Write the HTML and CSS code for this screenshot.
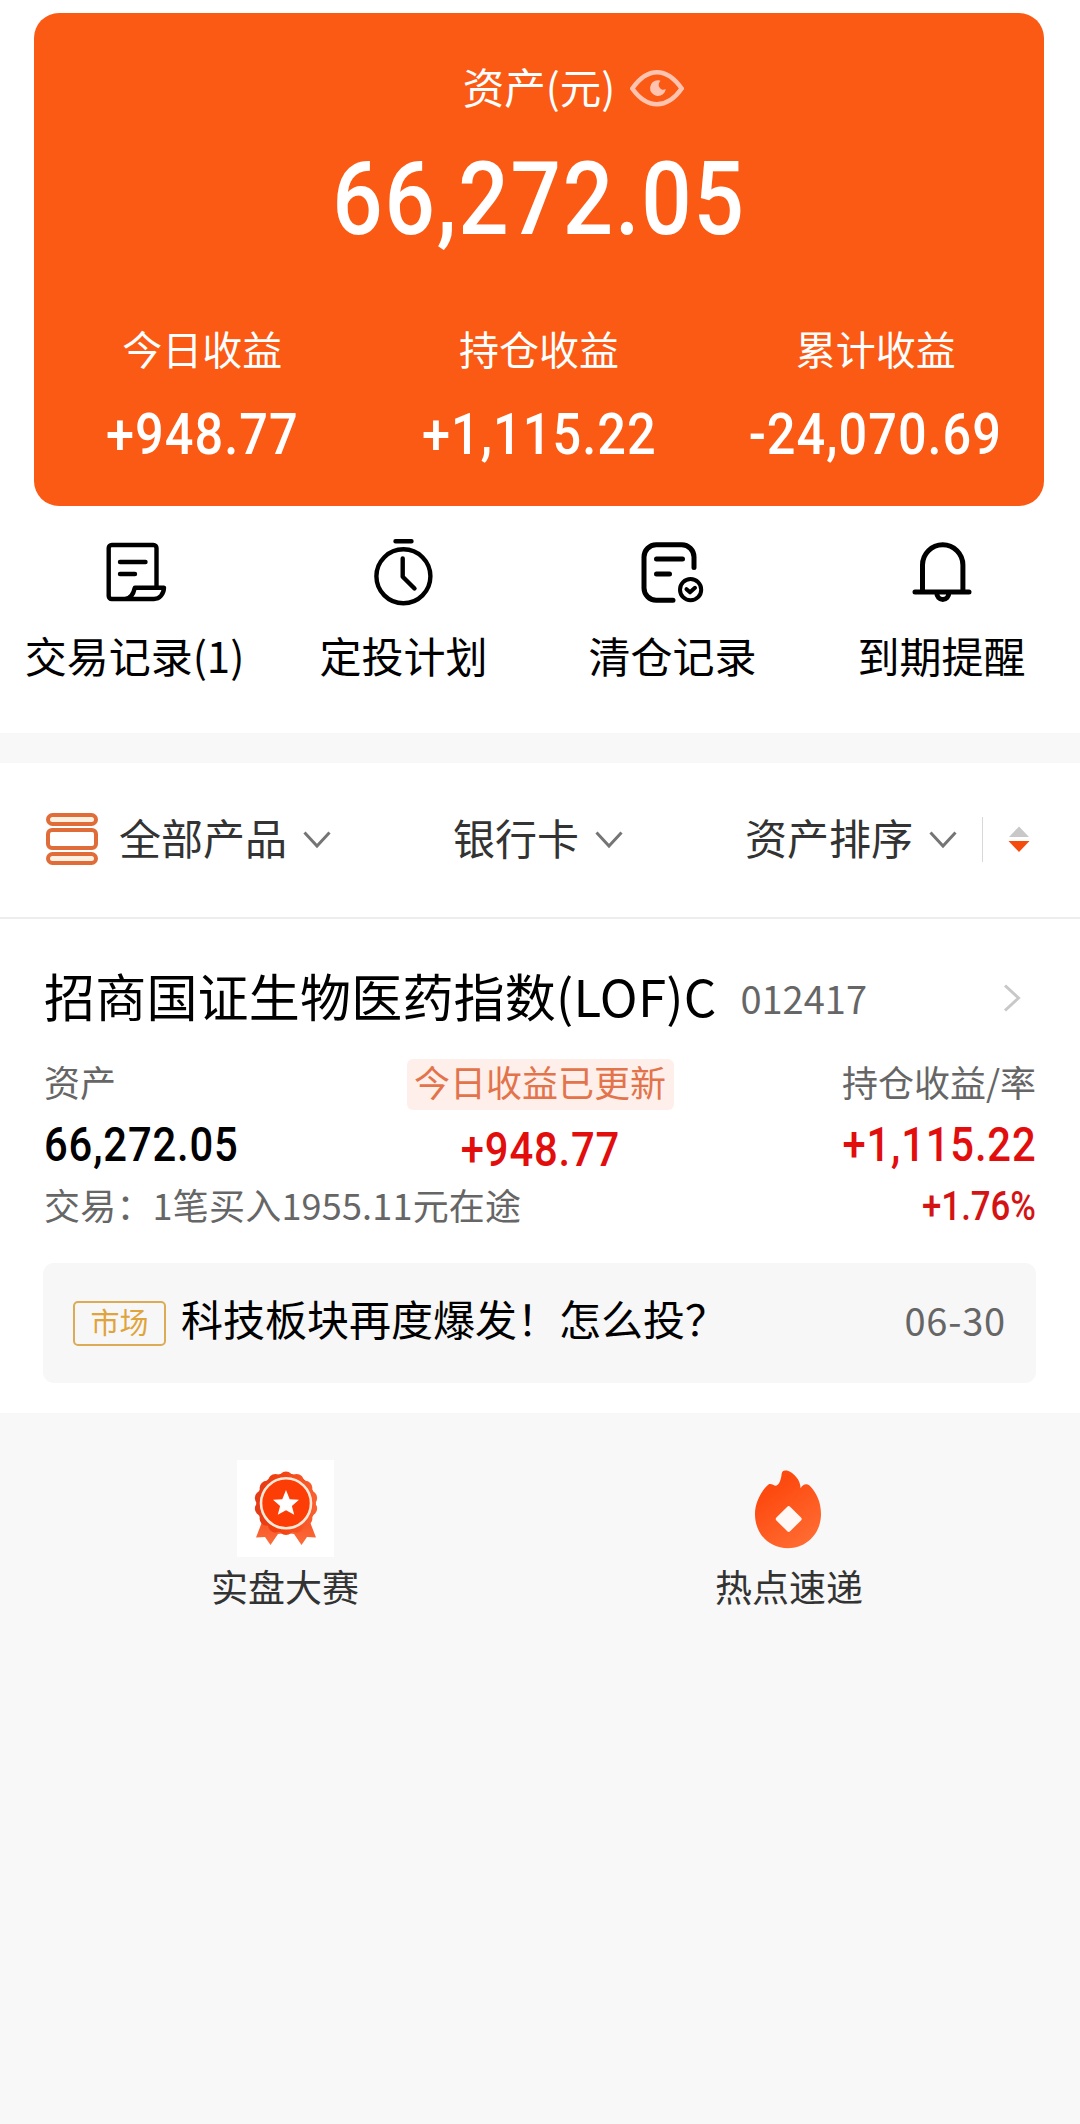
FILE: index.html
```html
<!DOCTYPE html>
<html lang="zh-CN">
<head>
<meta charset="utf-8">
<title>资产</title>
<link rel="stylesheet" href="styles.css">
</head>
<body>
<main class="page">
  <section class="top">
    <div class="summary">
      <div class="summary-head">
        <span class="summary-title">资产(元)</span>
        <svg class="eye" width="54" height="39" viewBox="0 0 54 39"><path class="eye-line" d="M2.300 19.500C9 10 17 3.200 27 3.200S45 10 51.700 19.500C45 29 37 35.200 27 35.200S9 29 2.300 19.500Z"/><path class="eye-pupil" d="M28.500 11.200a7.900 7.900 0 1 0 7.300 8.800a4.600 4.600 0 0 1-6.800-2.500c-.800-2.200 0-4.300 1.500-5.800Z"/></svg>
      </div>
      <div class="total num">66,272.05</div>
      <div class="stats">
        <div><div class="stat-label">今日收益</div><div class="stat-value num">+948.77</div></div>
        <div><div class="stat-label">持仓收益</div><div class="stat-value num">+1,115.22</div></div>
        <div><div class="stat-label">累计收益</div><div class="stat-value num">-24,070.69</div></div>
      </div>
    </div>
    <nav class="actions">
      <a class="action">
        <svg class="line-icon" width="70" height="70" viewBox="0 0 70 70"><path d="M56.500 50V11a3 3 0 0 0-3-3H11.700a3 3 0 0 0-3 3v48a3 3 0 0 0 3 3H54c5.500 0 9.600-4.500 10-11.300H34.800C33.500 57 31 61.500 25 62M20 25H45.500M20 37H35"/></svg>
        <span>交易记录(1)</span>
      </a>
      <a class="action">
        <svg class="line-icon" width="70" height="70" viewBox="0 0 70 70"><circle cx="34.400" cy="39.300" r="27"/><path d="M26.500 4.300H42.500M33.700 21.500V39.800L45.500 51.500"/></svg>
        <span>定投计划</span>
      </a>
      <a class="action">
        <svg class="line-icon bold" width="70" height="70" viewBox="0 0 70 70"><path d="M56 30.500V20a12.200 12.200 0 0 0-12.200-12.200H18.200A12.200 12.200 0 0 0 6 20V51a12.200 12.200 0 0 0 12.200 12.200H35M18.500 22H44.500M18.500 37H31.500"/><circle class="thin" cx="52.600" cy="52.700" r="10.600"/><path class="thin" d="M48.500 52.200L52 55.300L57 50.800"/></svg>
        <span>清仓记录</span>
      </a>
      <a class="action">
        <svg class="line-icon bold" width="70" height="70" viewBox="0 0 70 70"><path d="M15.500 54V28a20.200 20.200 0 0 1 40.400 0V54M8 55H62M29.800 56a6 6.500 0 0 0 12 0"/></svg>
        <span>到期提醒</span>
      </a>
    </nav>
  </section>

  <section class="filters">
    <div class="filter">
      <svg class="stack" width="52" height="52" viewBox="0 0 52 52"><rect x="2" y="2" width="48" height="9" rx="4.500"/><rect class="middle" x="2" y="17" width="48" height="18" rx="4"/><rect x="2" y="41" width="48" height="9" rx="4.500"/></svg>
      <span>全部产品</span>
      <svg class="chevron" width="28" height="18" viewBox="0 0 28 18"><path d="M1.500 1.500L14 15L26.500 1.500"/></svg>
    </div>
    <div class="filter">
      <span>银行卡</span>
      <svg class="chevron" width="28" height="18" viewBox="0 0 28 18"><path d="M1.500 1.500L14 15L26.500 1.500"/></svg>
    </div>
    <div class="filter">
      <span>资产排序</span>
      <svg class="chevron" width="28" height="18" viewBox="0 0 28 18"><path d="M1.500 1.500L14 15L26.500 1.500"/></svg>
      <i class="divider"></i>
      <svg class="sort" width="22" height="26" viewBox="0 0 22 26"><path fill="#c8c8c8" d="M1 11L11 0.500L21 11Z"/><path fill="#f54b0c" d="M0.500 15H21.500L11 26Z"/></svg>
    </div>
  </section>

  <section class="fund">
    <header class="fund-head">
      <h2>招商国证生物医药指数(LOF)C</h2>
      <span class="code">012417</span>
      <svg class="go" width="18" height="28" viewBox="0 0 18 28"><path d="M2 1.500L15.500 14L2 26.500"/></svg>
    </header>
    <div class="metrics">
      <div class="metric left">
        <div class="metric-label">资产</div>
        <div class="metric-value num">66,272.05</div>
      </div>
      <div class="metric center">
        <div class="badge">今日收益已更新</div>
        <div class="metric-value num up">+948.77</div>
      </div>
      <div class="metric right">
        <div class="metric-label">持仓收益/率</div>
        <div class="metric-value num up">+1,115.22</div>
      </div>
    </div>
    <div class="transit">
      <span>交易：1笔买入1955.11元在途</span>
      <span class="rate num up">+1.76%</span>
    </div>
    <div class="news">
      <span class="tag">市场</span>
      <span class="headline">科技板块再度爆发！怎么投？</span>
      <time class="date">06-30</time>
    </div>
  </section>

  <section class="links">
    <a class="link">
      <svg class="tile" width="97" height="97" viewBox="0 0 97 97">
        <defs><linearGradient id="medal" gradientUnits="userSpaceOnUse" x1="0" y1="11" x2="0" y2="85"><stop offset="0" stop-color="#e23a17"/><stop offset=".35" stop-color="#f4400f"/><stop offset="1" stop-color="#fc6c3c"/></linearGradient></defs>
        <g fill="url(#medal)">
          <path d="M25 62L19 77.600L28 77L33.500 85L41 74Q49 72.500 57 74L64.500 85L70 77L79 77.600L73 62Z"/>
          <circle cx="49" cy="43.300" r="29.800"/>
        </g>
        <circle cx="49" cy="43.300" r="24.500" fill="none" stroke="url(#medal)" stroke-width="14.500" stroke-linecap="round" pathLength="14" stroke-dasharray="0 1" transform="rotate(-90 49 43.300)" class="scallop"/>
        <circle cx="49" cy="43.300" r="25" fill="#fc3d06" stroke="#ffe9d9" stroke-width="2.600"/>
        <path fill="#fff" d="M49 30L52.700 39.200L62 39.700L54.900 45.900L57.200 54.800L49 50.200L40.800 54.800L43.100 45.900L36 39.700L45.300 39.200Z"/>
      </svg>
      <span>实盘大赛</span>
    </a>
    <a class="link">
      <svg width="97" height="97" viewBox="0 0 97 97">
        <defs><linearGradient id="flame" x1="0" y1="0" x2=".6" y2="1"><stop offset=".3" stop-color="#fd4a10"/><stop offset="1" stop-color="#ff6a30"/></linearGradient></defs>
        <path fill="url(#flame)" d="M27.500 24.500C30 23 32.500 25.800 35 25.800C39 24.500 40.200 18 40.700 13.500C41.200 10.500 43 10 46 10.600C53 13 59.500 20 59.600 28.300C61 25 65 22.800 68.500 25.500C75.500 32.500 80 42 80 54C80 74 65 88.200 47 88.200C28 88.200 14 74 14 54C14 42 21 30 27.500 24.500Z"/>
        <rect x="38" y="49.300" width="19.400" height="19.400" rx="2" transform="rotate(45 47.700 59)" fill="#fff8f4"/>
      </svg>
      <span>热点速递</span>
    </a>
  </section>
</main>
</body>
</html>
```
FILE: styles.css
```css
* { box-sizing: border-box; }
body {
  margin: 0;
  background: #f8f8f8;
  color: #000;
  font-family: "Noto Sans CJK SC", sans-serif;
  white-space: nowrap;
}
svg { display: block; flex: none; }
.page { width: 1080px; min-height: 2124px; }

/* condensed numerals for money amounts */
.num {
  font-family: Roboto, "Noto Sans CJK SC", sans-serif;
  font-weight: 500;
  letter-spacing: .02em;
  transform: scaleX(.87);
}

.top { height: 733px; padding-top: 13px; background: #fff; }
.summary {
  height: 493px;
  margin: 0 36px 0 34px;
  padding-top: 43px;
  border-radius: 25px;
  background: #fb5a14;
  color: #fff;
}
.summary-head {
  display: grid;
  grid-template-columns: 1fr auto 1fr;
  align-items: center;
  line-height: 60px;
  font-size: 41.5px;
}
.summary-title { grid-column: 2; }
.eye { margin: 5px 0 0 15px; }
.eye-line { fill: none; stroke: #ffc3b0; stroke-width: 4.600; stroke-linejoin: round; }
.eye-pupil { fill: #ffc3b0; }
.total { margin-top: 23px; font-size: 102px; line-height: 120px; text-align: center; }
.stats {
  display: grid;
  grid-template-columns: repeat(3, 1fr);
  margin-top: 59px;
  text-align: center;
}
.stat-label { font-size: 40px; line-height: 60px; }
.stat-value { margin-top: 21px; font-size: 58px; line-height: 70px; }

.actions { display: grid; grid-template-columns: repeat(4, 269px); padding-top: 31px; }
.action {
  display: flex;
  flex-direction: column;
  align-items: center;
  gap: 18px;
  font-size: 42px;
  line-height: 60px;
}
.line-icon { fill: none; stroke: #000; stroke-width: 4.4; stroke-linecap: round; stroke-linejoin: round; }
.line-icon.bold { stroke-width: 5; }
.line-icon .thin { stroke-width: 4; }

.filters {
  display: flex;
  align-items: center;
  gap: 122px;
  height: 156px;
  margin-top: 30px;
  padding: 0 46px;
  border-bottom: 2px solid #ededed;
  background: #fff;
  color: #333;
  font-size: 42px;
  line-height: 60px;
}
.filter { display: flex; align-items: center; }
.filter span { margin-top: -6px; }
.stack { margin: -2px 21px 0 0; fill: #fff1e2; stroke: #e06c3a; stroke-width: 4; }
.stack .middle { fill: #fff; }
.chevron { margin-left: 16px; fill: none; stroke: #757575; stroke-width: 3; }
.divider { width: 1px; height: 45px; margin: -2px 0 0 25px; background: #d8d8d8; }
.sort { margin: -2px 0 0 25px; }

.fund { height: 494px; padding: 41px 44px 0; background: #fff; }
.fund-head { display: flex; align-items: center; height: 70px; }
.fund-head h2 { margin: 0; font-size: 51px; font-weight: 400; line-height: 70px; letter-spacing: .2px; }
.code { margin: 4px 0 0 24px; color: #666; font-size: 38px; }
.go { margin: 6px 15px 0 auto; fill: none; stroke: #c8c8c8; stroke-width: 3; }
.metrics { display: grid; grid-template-columns: 1fr 267px 1fr; height: 116px; margin-top: 29px; }
.metric-label { color: #666; font-size: 36px; line-height: 45px; }
.metric-value { margin-top: 16px; font-size: 48px; line-height: 50px; }
.left .num { transform-origin: left; }
.center { text-align: center; }
.center .metric-value { margin-top: 15px; }
.right { text-align: right; }
.right .num, .rate.num { transform-origin: right; }
.badge { height: 51px; border-radius: 6px; background: #ffefea; color: #e2734a; font-size: 36px; line-height: 45px; }
.up { color: #e20d0d; }
.transit { display: flex; justify-content: space-between; margin-top: 6px; color: #666; font-size: 36px; line-height: 46px; letter-spacing: .2px; }
.transit .rate { margin-top: 3px; color: #d41414; font-size: 40px; letter-spacing: 0; }
.news {
  display: flex;
  align-items: center;
  height: 120px;
  margin: 33px 0 0 -1px;
  padding: 0 30px;
  border-radius: 11px;
  background: #f7f7f7;
}
.tag {
  width: 93px;
  height: 45px;
  border: 2px solid #dcab55;
  border-radius: 5px;
  color: #dfa43c;
  font-size: 29px;
  line-height: 36px;
  text-align: center;
}
.headline { margin: -10px 0 0 15px; font-size: 42px; line-height: 60px; }
.date { margin: -8px 0 0 auto; color: #666; font-size: 38px; letter-spacing: .8px; }

.links { display: grid; grid-template-columns: 504px 504px; padding: 47px 0 0 33px; }
.link {
  display: flex;
  flex-direction: column;
  align-items: center;
  gap: 7px;
  color: #333;
  font-size: 37px;
  line-height: 44px;
}
.tile { background: #fff; }
```
